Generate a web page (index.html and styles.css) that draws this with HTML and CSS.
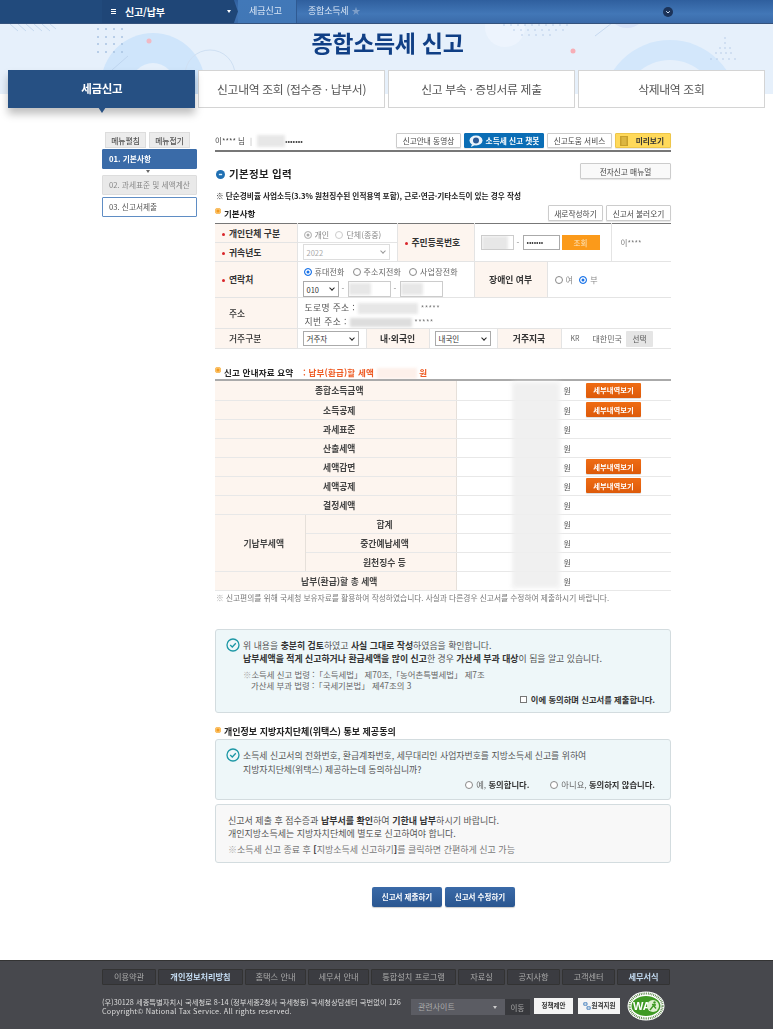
FILE: index.html
```html
<!DOCTYPE html>
<html lang="ko">
<head>
<meta charset="utf-8">
<title>종합소득세 신고</title>
<link rel="stylesheet" href="styles.css">
</head>
<body>
<header class="topbar">
  <div class="topbar-left"></div>
  <div class="topbar-menu"><span class="burger"></span><b>신고/납부</b><span class="caret"></span></div>
  <div class="crumb crumb-1">세금신고</div>
  <div class="crumb crumb-2">종합소득세 <span class="star">★</span></div>
  <span class="round-btn"><svg viewBox="0 0 10 10" width="10" height="10"><circle cx="5" cy="5" r="5" fill="#1c3358"/><path d="M3.2 4.2 5 6l1.8-1.8" fill="none" stroke="#cfe0f5" stroke-width="1"/></svg></span>
</header>
<section class="hero">
  <svg class="hero-art" viewBox="0 0 773 70" width="773" height="70" aria-hidden="true">
    <circle cx="153" cy="61" r="52" fill="#cfe5fb"/>
    <circle cx="153" cy="61" r="22" fill="#e6f0fb"/>
    <circle cx="210" cy="51" r="25" fill="none" stroke="#cfe0f3"/>
    <circle cx="149" cy="17" r="2.5" fill="#f0b9c4"/>
    <circle cx="573" cy="27" r="2.5" fill="#f7aeb6"/>
    <circle cx="670" cy="84" r="68" fill="#d3e7fb"/>
    <circle cx="670" cy="84" r="48" fill="#e6f0fb"/>
    <circle cx="505" cy="3" r="20" fill="#edf4fd"/>
    <circle cx="627" cy="-16" r="20" fill="#d8e3f8"/>
    <path d="M595 12 612 -1M112 46 128 32M10 0 18 7M18 0 26 7M26 0 34 7M34 0 42 7M42 0 50 7M50 0 56 5" stroke="#b7cfe9" stroke-width=".7"/>
    <g fill="#a8c3e2">
      <circle cx="98" cy="5" r="1"/><circle cx="106" cy="5" r="1"/><circle cx="114" cy="5" r="1"/><circle cx="122" cy="5" r="1"/>
      <circle cx="98" cy="13" r="1"/><circle cx="106" cy="13" r="1"/><circle cx="114" cy="13" r="1"/><circle cx="122" cy="13" r="1"/>
      <circle cx="98" cy="20" r="1"/><circle cx="106" cy="20" r="1"/><circle cx="114" cy="20" r="1"/><circle cx="122" cy="20" r="1"/>
      <circle cx="98" cy="28" r="1"/><circle cx="106" cy="28" r="1"/><circle cx="114" cy="28" r="1"/><circle cx="122" cy="28" r="1"/>
      <circle cx="504" cy="1" r=".7"/><circle cx="511" cy="1" r=".7"/><circle cx="518" cy="1" r=".7"/><circle cx="525" cy="1" r=".7"/><circle cx="532" cy="1" r=".7"/><circle cx="539" cy="1" r=".7"/><circle cx="546" cy="1" r=".7"/><circle cx="553" cy="1" r=".7"/><circle cx="560" cy="1" r=".7"/><circle cx="567" cy="1" r=".7"/>
      <circle cx="514" cy="6" r=".7"/><circle cx="521" cy="6" r=".7"/><circle cx="528" cy="6" r=".7"/><circle cx="535" cy="6" r=".7"/><circle cx="542" cy="6" r=".7"/><circle cx="549" cy="6" r=".7"/><circle cx="556" cy="6" r=".7"/><circle cx="563" cy="6" r=".7"/>
      <circle cx="522" cy="11" r=".7"/><circle cx="529" cy="11" r=".7"/><circle cx="536" cy="11" r=".7"/><circle cx="543" cy="11" r=".7"/><circle cx="550" cy="11" r=".7"/>
      <circle cx="725" cy="14" r=".7"/><circle cx="725" cy="19" r=".7"/><circle cx="720" cy="24" r=".7"/><circle cx="725" cy="24" r=".7"/><circle cx="730" cy="24" r=".7"/><circle cx="716" cy="29" r=".7"/><circle cx="721" cy="29" r=".7"/><circle cx="726" cy="29" r=".7"/><circle cx="731" cy="29" r=".7"/><circle cx="711" cy="35" r=".7"/><circle cx="717" cy="35" r=".7"/><circle cx="723" cy="35" r=".7"/><circle cx="729" cy="35" r=".7"/><circle cx="735" cy="35" r=".7"/>
    </g>
  </svg>
  <h1 class="hero-title">종합소득세 신고</h1>
</section>
<nav class="tabs">
  <a class="tab tab-active">세금신고</a>
  <a class="tab">신고내역 조회 (접수증 · 납부서)</a>
  <a class="tab">신고 부속 · 증빙서류 제출</a>
  <a class="tab">삭제내역 조회</a>
</nav>

<div class="page">
  <aside class="side">
    <div class="side-btns"><button class="side-btn">메뉴펼침</button><button class="side-btn">메뉴접기</button></div>
    <div class="step step-on">01. 기본사항</div>
    <div class="step-arrow"></div>
    <div class="step step-off">02. 과세표준 및 세액계산</div>
    <div class="step step-next">03. 신고서제출</div>
  </aside>

  <main class="content">
    <div class="userbar">
      <span class="user">이**** 님 <i class="sep">|</i><i class="blur blur-id"></i>•••••••</span>
      <div class="userbar-btns">
        <button class="btn b65">신고안내 동영상</button>
        <button class="btn btn-chat"><svg viewBox="0 0 14 12" width="14" height="12"><ellipse cx="7" cy="5.5" rx="6.5" ry="5" fill="#eaf3fb"/><path d="M3 9 2 12 6 10Z" fill="#eaf3fb"/><circle cx="7" cy="5.5" r="3" fill="#2b5a96"/></svg>소득세 신고 챗봇</button>
        <button class="btn b65">신고도움 서비스</button>
        <button class="btn btn-preview"><svg viewBox="0 0 8 10" width="8" height="10"><rect width="8" height="10" fill="#c8a02c"/><rect x="1.5" y="1" width="5" height="8" fill="#dcb640"/></svg><span>미리보기</span></button>
      </div>
    </div>

    <div class="head-row">
      <h2 class="h-main"><svg viewBox="0 0 10 10" width="9" height="9"><circle cx="5" cy="5" r="5" fill="#1f6fb2"/><rect x="3.2" y="4.2" width="3.6" height="1.6" fill="#dff0fb"/></svg>기본정보 입력</h2>
      <button class="btn btn-manual">전자신고 매뉴얼</button>
    </div>
    <p class="note-bold">※ 단순경비율 사업소득(3.3% 원천징수된 인적용역 포함), 근로·연금·기타소득이 있는 경우 작성</p>

    <div class="sub-row">
      <h3 class="h-sub h-basic">기본사항</h3>
      <div class="sub-btns"><button class="btn btn-w b55">새로작성하기</button><button class="btn btn-w b65">신고서 불러오기</button></div>
    </div>

    <table class="form-table">
      <colgroup><col class="c82"><col class="c69"><col class="c31"><col class="c32"><col class="c45"><col class="c23"><col class="c50"><col class="c14"><col class="c50"><col class="c60"></colgroup>
      <tr class="r19">
        <th class="req"><span class="dot"></span>개인단체 구분</th>
        <td colspan="2" class="muted cell-low"><span class="radio radio-dis-on"></span>개인 <span class="radio radio-dis gap-l"></span>단체(종중)</td>
        <th colspan="2" rowspan="2" class="req ctr"><span class="dot"></span>주민등록번호</th>
        <td colspan="4" rowspan="2"><div class="rrn"><span class="rrn-a"><i class="blur blur-rrn"></i></span><span class="dash">-</span><span class="rrn-b">•••••••</span><button class="btn-lookup">조회</button></div></td>
        <td rowspan="2" class="name">이****</td>
      </tr>
      <tr class="r19">
        <th class="req"><span class="dot"></span>귀속년도</th>
        <td colspan="2"><span class="sel sel-dis">2022<i class="chev"></i></span></td>
      </tr>
      <tr class="r36">
        <th class="req"><span class="dot"></span>연락처</th>
        <td colspan="4" class="contact">
          <div class="radios"><span class="radio radio-on"></span>휴대전화<span class="radio gap-l2"></span>주소지전화<span class="radio gap-l2"></span>사업장전화</div>
          <div class="phone"><span class="sel sel-010">010<i class="chev chev-dark"></i></span><span class="dash">-</span><span class="ph"><i class="blur blur-ph"></i></span><span class="dash">-</span><span class="ph"><i class="blur blur-ph"></i></span></div>
        </td>
        <th colspan="2" class="ctr">장애인 여부</th>
        <td colspan="3" class="muted pl"><span class="radio"></span>여 <span class="radio radio-on gap-l"></span>부</td>
      </tr>
      <tr class="r31">
        <th class="plain">주소</th>
        <td colspan="9" class="addr">
          <div>도로명 주소 : <i class="blur blur-a1"></i> <span class="stars">*****</span></div>
          <div>지번 주소 : <i class="blur blur-a2"></i> <span class="stars">*****</span></div>
        </td>
      </tr>
      <tr class="r20">
        <th class="plain">거주구분</th>
        <td><span class="sel sel-sm">거주자<i class="chev chev-dark"></i></span></td>
        <th colspan="2" class="ctr">내·외국인</th>
        <td colspan="2"><span class="sel sel-sm">내국인<i class="chev chev-dark"></i></span></td>
        <th colspan="2" class="ctr">거주지국</th>
        <td colspan="2" class="nation-cell"><div class="nation"><span class="kr">KR</span><span>대한민국</span><button class="btn-pick">선택</button></div></td>
      </tr>
    </table>

    <h3 class="h-sub h-sum">신고 안내자료 요약 <em class="sum-red">: 납부(환급)할 세액 <i class="blur blur-red"></i> 원</em></h3>

    <div class="sum-wrap">
      <table class="sum-table">
        <colgroup><col class="s90"><col class="s151"><col class="s129"><col class="s86"></colgroup>
        <tr><th colspan="2">종합소득금액</th><td class="unit">원</td><td><button class="btn-detail">세부내역보기</button></td></tr>
        <tr><th colspan="2">소득공제</th><td class="unit">원</td><td><button class="btn-detail">세부내역보기</button></td></tr>
        <tr><th colspan="2">과세표준</th><td class="unit">원</td><td></td></tr>
        <tr><th colspan="2">산출세액</th><td class="unit">원</td><td></td></tr>
        <tr><th colspan="2">세액감면</th><td class="unit">원</td><td><button class="btn-detail">세부내역보기</button></td></tr>
        <tr><th colspan="2">세액공제</th><td class="unit">원</td><td><button class="btn-detail">세부내역보기</button></td></tr>
        <tr><th colspan="2">결정세액</th><td class="unit">원</td><td></td></tr>
        <tr><th rowspan="3">기납부세액</th><th>합계</th><td class="unit">원</td><td></td></tr>
        <tr><th>중간예납세액</th><td class="unit">원</td><td></td></tr>
        <tr><th>원천징수 등</th><td class="unit">원</td><td></td></tr>
        <tr><th colspan="2">납부(환급)할 총 세액</th><td class="unit">원</td><td></td></tr>
      </table>
      <div class="sum-blur"></div>
    </div>
    <p class="note-gray"><span class="kome">※</span> 신고편의를 위해 국세청 보유자료를 활용하여 작성하였습니다. 사실과 다른경우 신고서를 수정하여 제출하시기 바랍니다.</p>

    <div class="box box-teal box-confirm">
      <svg class="check" viewBox="0 0 14 14" width="14" height="14"><circle cx="7" cy="7" r="6" fill="none" stroke="#1c97a5" stroke-width="1.3"/><path d="M4.2 7 6.3 9 9.8 5.2" fill="none" stroke="#1c97a5" stroke-width="1.3"/></svg>
      <p class="box-line">위 내용을 <b>충분히 검토</b>하였고 <b>사실 그대로 작성</b>하였음을 확인합니다.</p>
      <p class="box-line"><b>납부세액을 적게 신고하거나 환급세액을 많이 신고</b>한 경우 <b>가산세 부과 대상</b>이 됨을 알고 있습니다.</p>
      <p class="box-law"><span class="kome">※</span>소득세 신고 법령 :「소득세법」 제70조,「농어촌특별세법」 제7조<br><span class="law-2">가산세 부과 법령 :「국세기본법」 제47조의 3</span></p>
      <div class="agree"><span class="chk"></span><b>이에 동의하며 신고서를 제출합니다.</b></div>
    </div>

    <h3 class="h-sub h-consent">개인정보 지방자치단체(위택스) 통보 제공동의</h3>
    <div class="box box-teal box-consent">
      <svg class="check" viewBox="0 0 14 14" width="14" height="14"><circle cx="7" cy="7" r="6" fill="none" stroke="#1c97a5" stroke-width="1.3"/><path d="M4.2 7 6.3 9 9.8 5.2" fill="none" stroke="#1c97a5" stroke-width="1.3"/></svg>
      <p class="box-line line-14">소득세 신고서의 전화번호, 환급계좌번호, 세무대리인 사업자번호를 지방소득세 신고를 위하여</p>
      <p class="box-line line-14">지방자치단체(위택스) 제공하는데 동의하십니까?</p>
      <div class="agree agree-2"><span><span class="radio"></span>예, <b>동의합니다.</b></span><span><span class="radio"></span>아니요, <b>동의하지 않습니다.</b></span></div>
    </div>

    <div class="box box-gray">
      <p class="box-line">신고서 제출 후 접수증과 <b>납부서를 확인</b>하여 <b>기한내 납부</b>하시기 바랍니다.</p>
      <p class="box-line">개인지방소득세는 지방자치단체에 별도로 신고하여야 합니다.</p>
      <p class="box-foot"><span class="kome">※</span>소득세 신고 종료 후 <b>[</b>지방소득세 신고하기<b>]</b>를 클릭하면 간편하게 신고 가능</p>
    </div>

    <div class="actions"><button class="btn-main">신고서 제출하기</button><button class="btn-main">신고서 수정하기</button></div>
  </main>
</div>

<footer class="footer">
  <nav class="foot-nav">
    <a class="fn w54">이용약관</a><a class="fn fn-hi w85">개인정보처리방침</a><a class="fn w61">홈택스 안내</a><a class="fn w61">세무서 안내</a><a class="fn w85">통합설치 프로그램</a><a class="fn w47">자료실</a><a class="fn w53">공지사항</a><a class="fn w53">고객센터</a><a class="fn fn-hi w53">세무서식</a>
  </nav>
  <div class="foot-row">
    <p class="foot-addr">(우)30128 세종특별자치시 국세청로 8-14 (정부세종2청사 국세청동) 국세청상담센터 국번없이 126<br><span class="copy">Copyright© National Tax Service. All rights reserved.</span></p>
    <div class="foot-sel">관련사이트<i class="foot-caret"></i></div>
    <span class="foot-go">이동</span>
    <span class="foot-chip">정책제안</span>
    <span class="foot-chip chip-2"><svg viewBox="0 0 10 10" width="8" height="8"><path d="M1 1h4v3H1zM5 6h4v3H5z" fill="none" stroke="#2a6db5"/></svg>원격지원</span>
    <svg class="wa" viewBox="0 0 38 30" width="38" height="30"><ellipse cx="19" cy="15" rx="18.5" ry="14.5" fill="#fff"/><ellipse cx="19" cy="15" rx="16.5" ry="12.5" fill="none" stroke="#4e7d3a" stroke-width="2.2" stroke-dasharray=".8 1"/><ellipse cx="19" cy="15" rx="14.5" ry="10" fill="#3f9a24"/><text x="6" y="19" font-family="Liberation Sans" font-size="11" font-weight="700" fill="#fff">WA</text><circle cx="26" cy="15" r="6" fill="#dff0d0"/><circle cx="27.5" cy="11.5" r="1.2" fill="#3f9a24"/><path d="M23 19 26.5 14.5 29 17.5M25 13.5 29 14" fill="none" stroke="#3f9a24" stroke-width="1.4"/></svg>
  </div>
</footer>
</body>
</html>
```

FILE: styles.css
```css
* { box-sizing: border-box; }
html, body { margin: 0; padding: 0; }
body { width: 773px; height: 1029px; overflow: hidden; background: #fff; color: #444; font-family: "Noto Sans CJK KR", "Noto Sans", sans-serif; font-size: 8px; line-height: 1.2; filter: blur(.4px); }
h1, h2, h3, p { margin: 0; }
em, i { font-style: normal; }
button { font-family: inherit; padding: 0; cursor: pointer; }

.topbar { height: 24px; display: flex; align-items: center; background: linear-gradient(#2f5f9e, #4277b7 60%, #3a6aa8); border-bottom: 1px solid #34527c; color: #dbe7f6; font-size: 9px; }
.topbar-left { width: 102px; height: 100%; background: #214a7c; }
.topbar-menu { width: 136px; height: 100%; flex: none; background: #1f4677; display: flex; align-items: center; color: #fff; padding-left: 9px; font-size: 10px; clip-path: polygon(0 0, 97% 0, 100% 50%, 97% 100%, 0 100%); }
.topbar-menu b { width: 102px; font-weight: 700; letter-spacing: -.2px; white-space: nowrap; }
.burger { width: 5px; height: 5px; margin-right: 9px; border-top: 1px solid #fff; border-bottom: 1px solid #fff; position: relative; }
.burger::after { content: ""; position: absolute; left: 0; right: 0; top: 1px; height: 1px; background: #fff; }
.caret { border: 2.5px solid transparent; border-top: 3px solid #fff; border-bottom: 0; }
.crumb { height: 100%; flex: none; display: flex; align-items: center; white-space: nowrap; }
.crumb-1 { width: 58px; padding-left: 11px; background: linear-gradient(#4178b8, #4177b6); }
.crumb-2 { width: 65px; padding-left: 11px; border-left: 1px solid #2f5a92; letter-spacing: -.2px; }
.star { margin-left: 3px; color: #7d9ec9; font-size: 9px; }
.round-btn { margin-left: 302px; display: flex; }

.hero { height: 70px; position: relative; overflow: hidden; background: #e6f0fb; text-align: center; }
.hero-art { position: absolute; left: 0; top: 0; }
.hero-title { position: relative; padding: 3px 0 0 2px; color: #103f85; font-size: 23px; font-weight: 700; line-height: 30px; letter-spacing: -.3px; }

.tabs { position: relative; height: 38px; margin: -24px 8px 0 7px; padding-left: 1px; display: flex; gap: 2.5px; }
.tab { flex: 1 1 0; display: flex; align-items: center; justify-content: center; background: #fff; border: 1px solid #d4d4d4; color: #555; font-size: 11.8px; letter-spacing: -.3px; white-space: nowrap; }
.tab-active { position: relative; background: #265083; border-color: #265083; color: #fff; font-size: 11.5px; font-weight: 700; box-shadow: 0 6px 8px rgba(0,0,0,.25); }
.tab-active::after { content: ""; position: absolute; left: 50%; bottom: -6px; margin-left: -4px; border: 4px solid transparent; border-top: 6px solid #265083; border-bottom: 0; }

.page { display: flex; padding: 24px 0 0 102px; height: 852px; }
.side { width: 95px; margin-right: 18px; }
.side-btns { display: flex; gap: 3px; padding-left: 3px; height: 17px; }
.side-btn { width: 41px; height: 16px; border: 1px solid #ddd; background: #ececec; color: #555; font-size: 7.8px; font-weight: 500; }
.step { height: 20px; display: flex; align-items: center; padding-left: 6px; font-size: 7.7px; border-radius: 1px; }
.step-on { background: #3a6ba8; color: #fff; font-weight: 700; border: 1px solid #3a6ba8; }
.step-arrow { width: 0; margin: 1px 0 2px 44px; border: 2.5px solid transparent; border-top: 3px solid #666; border-bottom: 0; }
.step-off { background: #e9e9e9; border: 1px solid #ddd; color: #888; margin-bottom: 2px; white-space: nowrap; }
.step-next { background: #fff; border: 1px solid #5f8dc4; color: #555; }

.content { width: 456px; }
.userbar { height: 20px; display: flex; align-items: center; justify-content: space-between; border-bottom: 2px solid #777; padding-bottom: 1px; }
.user { display: flex; align-items: center; color: #444; font-size: 7.5px; }
.sep { margin: 0 5px; color: #aaa; }
.blur { display: inline-block; background: #e7e7e7; filter: blur(1.5px); vertical-align: middle; }
.blur-id { width: 28px; height: 12px; }
.userbar-btns { display: flex; gap: 3px; }
.btn { height: 15px; display: inline-flex; align-items: center; justify-content: center; gap: 3px; background: #fff; border: 1px solid #ccc; color: #444; font-size: 7.7px; border-radius: 1px; padding: 0; white-space: nowrap; box-shadow: 0 1px 1px #e6e6e6; }
.b65 { width: 65px; } .b55 { width: 55px; }
.btn-chat { width: 80px; background: #0a6db5; border-color: #0a6db5; color: #fff; font-weight: 700; }
.btn-preview { width: 56px; justify-content: space-between; padding: 0 6px 0 4px; background: #ffd95a; border-color: #eec64a; color: #333; font-weight: 700; }
.head-row { display: flex; justify-content: space-between; align-items: flex-start; margin-top: 11px; height: 22px; }
.h-main { display: flex; align-items: center; gap: 4px; margin: 5px 0 0 1px; color: #222; font-size: 10.5px; font-weight: 700; letter-spacing: .3px; }
.btn-manual { width: 91px; height: 16px; background: #f9f9f9; }
.note-bold { margin-top: 5px; padding-left: 1px; color: #222; font-size: 7.65px; font-weight: 700; line-height: 12px; white-space: nowrap; }
.sub-row { display: flex; justify-content: space-between; align-items: flex-start; margin-top: 3px; height: 18px; }
.sub-btns { display: flex; gap: 3px; }
.btn-w { height: 16px; }
.h-sub { position: relative; padding-left: 9px; color: #222; font-size: 8.5px; font-weight: 700; line-height: 14px; }
.h-sub::before { content: ""; position: absolute; left: 0; top: 2px; width: 6px; height: 6px; border-radius: 50%; background: #f39a1e; box-shadow: inset 0 0 0 1.5px #fbc36c; }
.h-basic { margin-top: 1px; }

.form-table { width: 456px; table-layout: fixed; border-collapse: collapse; border-top: 1px solid #777; font-size: 8px; }
.c82 { width: 82px; } .c69 { width: 69px; } .c31 { width: 31px; } .c32 { width: 32px; } .c45 { width: 45px; } .c23 { width: 23px; } .c50 { width: 50px; } .c14 { width: 14px; } .c60 { width: 60px; }
.form-table th, .form-table td { border-bottom: 1px solid #e4e4e4; border-left: 1px solid #e4e4e4; padding: 0; }
.form-table th:first-child { border-left: 0; }
.form-table th { background: #fdf5ef; color: #333; font-weight: 700; font-size: 8.8px; text-align: left; padding: 2px 0 0 14px; white-space: nowrap; }
.form-table td { padding-left: 5px; white-space: nowrap; }
.form-table td.cell-low { padding-top: 3px; }
.form-table th.ctr { text-align: center; padding-left: 0; }
.form-table th.plain { font-weight: 500; }
.form-table .req { position: relative; padding-left: 14px; }
.form-table th.ctr.req { text-align: left; padding-left: 14px; }
.dot { position: absolute; left: 7px; top: 50%; margin-top: -.5px; width: 3px; height: 3px; border-radius: 50%; background: #d9252a; }
.r19 { height: 19px; } .r36 { height: 36px; } .r31 { height: 31px; } .r20 { height: 20px; }
.muted { color: #888; }
.form-table td.pl { padding-left: 6px; }
.radio { display: inline-block; width: 8px; height: 8px; margin: 0 3px 0 1px; border: 1px solid #888; border-radius: 50%; background: #fff; vertical-align: -1px; }
.radio-on { border-color: #1a73e8; box-shadow: inset 0 0 0 1.5px #fff; background: #1a73e8; }
.radio-dis { border-color: #ccc; }
.radio-dis-on { border-color: #bbb; background: #aaa; box-shadow: inset 0 0 0 1.5px #fff; }
.gap-l { margin-left: 4px; }
.gap-l2 { margin-left: 8px; }
.sel { position: relative; display: inline-flex; align-items: center; border: 1px solid #aaa; background: #fff; padding-left: 3px; font-size: 7.5px; color: #333; height: 14px; vertical-align: middle; }
.sel-dis { width: 87px; height: 16px; border-color: #ddd; color: #aaa; }
.sel-010 { width: 36px; height: 16px; }
.sel-sm { width: 56px; height: 15px; }
.chev { position: absolute; right: 4px; top: 4px; width: 4px; height: 4px; border-right: 1px solid #999; border-bottom: 1px solid #999; transform: rotate(45deg); }
.chev-dark { border-color: #222; border-width: 0 1.5px 1.5px 0; }
.rrn { display: flex; align-items: center; padding-left: 1px; }
.rrn-a { width: 33px; height: 15px; border: 1px solid #ccc; display: block; overflow: hidden; }
.blur-rrn { display: block; width: 26px; height: 15px; }
.dash { width: 9px; text-align: center; color: #888; }
.rrn-b { width: 37px; height: 15px; border: 1px solid #aaa; display: flex; align-items: center; padding-left: 3px; font-size: 7px; color: #333; }
.btn-lookup { margin-left: 2px; width: 38px; height: 15px; border: 0; background: #fb9a1a; color: #fde7c0; font-size: 7.5px; }
.form-table td.name { padding-left: 9px; color: #777; font-size: 7.5px; }
.form-table td.contact { vertical-align: top; padding-top: 3px; }
.radios { color: #666; font-size: 8px; line-height: 14px; letter-spacing: .15px; }
.phone { display: flex; align-items: center; height: 16px; margin-top: 2px; }
.ph { width: 43px; height: 16px; border: 1px solid #ccc; display: block; overflow: hidden; padding-top: 1px; }
.blur-ph { display: block; width: 22px; height: 12px; }
.form-table td.addr { padding: 3px 0 0 7px; color: #555; font-size: 8.8px; line-height: 13.5px; letter-spacing: .35px; }
.blur-a1 { width: 60px; height: 11px; } .blur-a2 { width: 62px; height: 9px; background: #ddd; }
.stars { font-size: 7.5px; color: #777; }
.nation { display: flex; align-items: center; color: #666; font-size: 8px; }
.form-table td.nation-cell { padding-left: 9px; }
.kr { font-size: 7px; margin-right: 13px; }
.btn-pick { margin-left: 4px; width: 27px; height: 16px; border: 0; background: #e5e5e5; color: #555; font-size: 7.5px; border-radius: 1px; }

.h-sum { margin-top: 16px; height: 14px; letter-spacing: .2px; }
.sum-red { margin-left: 7px; color: #ee5a22; font-weight: 700; }
.blur-red { width: 40px; height: 11px; background: #fdf0ea; }
.sum-wrap { position: relative; border-top: 2px solid #aaa; }
.sum-table { width: 456px; table-layout: fixed; border-collapse: collapse; font-size: 8.8px; }
.s90 { width: 90px; } .s151 { width: 151px; } .s129 { width: 129px; } .s86 { width: 86px; }
.sum-table tr { height: 19px; }
.sum-table th, .sum-table td { border-bottom: 1px solid #e8e8e8; padding: 0; }
.sum-table th { background: #fdf5ef; color: #444; font-weight: 700; text-align: center; padding: 3px 0 0 8px; border-right: 1px solid #e6e0da; }
.sum-table td.unit { padding: 2px 0 0 107px; color: #555; font-size: 8px; }
.btn-detail { display: block; margin: 0 0 0 1px; width: 55px; height: 15px; border: 0; border-radius: 1px; background: linear-gradient(#ef6c14, #dd5a0a); color: #fff; font-size: 7.3px; font-weight: 700; box-shadow: 0 1px 1px #ddd; }
.sum-blur { position: absolute; left: 297px; top: 1px; width: 48px; height: 206px; background: #efefef; filter: blur(2px); opacity: .9; }
.note-gray { margin-top: 1px; padding-left: 1px; color: #777; font-size: 7.73px; line-height: 12px; white-space: nowrap; }
.kome { color: #aaa; }

.box { position: relative; border: 1px solid #d3dcdf; border-radius: 3px; color: #555; font-size: 8.9px; }
.box b { color: #333; font-weight: 700; }
.box-teal { background: #eef7f9; }
.box-confirm { height: 84px; margin-top: 25px; padding: 9px 0 0 27px; }
.box-consent { height: 61px; padding: 9px 0 0 27px; }
.box-gray { height: 59px; margin-top: 4px; background: #f8f8f8; padding: 9px 0 0 12px; font-size: 9px; }
.check { position: absolute; left: 10px; top: 8px; }
.box-line { line-height: 13px; white-space: nowrap; }
.line-14 { line-height: 14px; }
.box-law { margin-top: 4px; line-height: 11px; font-size: 8.4px; color: #666; white-space: nowrap; }
.law-2 { padding-left: 8px; }
.box-foot { margin-top: 3px; line-height: 13px; color: #777; white-space: nowrap; }
.agree { position: absolute; right: 15px; bottom: 7px; color: #333; font-size: 8.3px; display: flex; align-items: center; }
.agree-2 { gap: 20px; color: #666; bottom: 9px; }
.chk { display: inline-block; width: 7px; height: 7px; border: 1px solid #777; background: #fff; margin-right: 4px; }
.h-consent { margin-top: 12px; height: 14px; font-size: 9px; }
.actions { display: flex; justify-content: center; gap: 3px; margin-top: 24px; margin-left: 1px; }
.btn-main { width: 70px; height: 20px; border: 0; border-radius: 2px; background: linear-gradient(#3a6aa8, #2a5690); color: #fff; font-size: 7.5px; font-weight: 700; box-shadow: 0 1px 1px #ccc; }

.footer { height: 69px; background: #47484d; border-top: 1px solid #333; padding: 8px 0 0 102px; color: #ddd; }
.foot-nav { display: flex; gap: 2px; }
.fn { height: 16px; display: flex; align-items: center; justify-content: center; background: #3b3c41; border: 1px solid #333; color: #aaa; font-size: 8.2px; border-radius: 1px; white-space: nowrap; }
.fn-hi { color: #c4dcf3; font-weight: 700; }
.w54 { width: 54px; } .w85 { width: 85px; } .w61 { width: 61px; } .w47 { width: 47px; } .w53 { width: 53px; }
.foot-row { display: flex; align-items: flex-start; margin-top: 13px; }
.foot-addr { width: 309px; font-size: 7.3px; line-height: 9px; white-space: nowrap; color: #ddd; }
.copy { letter-spacing: .2px; }
.foot-sel { position: relative; width: 94px; height: 16px; margin-top: 1px; padding-left: 7px; display: flex; align-items: center; background: #5b5c63; color: #aaa; font-size: 8px; }
.foot-caret { position: absolute; right: 8px; top: 7px; border: 2.5px solid transparent; border-top: 3px solid #ccc; border-bottom: 0; }
.foot-go { width: 25px; height: 16px; margin-top: 1px; background: #38393d; display: flex; align-items: center; justify-content: center; color: #aaa; font-size: 7.5px; }
.foot-chip { height: 16px; width: 39px; margin-left: 4px; background: #f4f4f4; color: #333; font-size: 6.5px; font-weight: 700; display: flex; align-items: center; justify-content: center; gap: 1px; white-space: nowrap; }
.chip-2 { width: 42px; margin-left: 5px; }
.wa { margin: -7px 0 0 7px; }
```
